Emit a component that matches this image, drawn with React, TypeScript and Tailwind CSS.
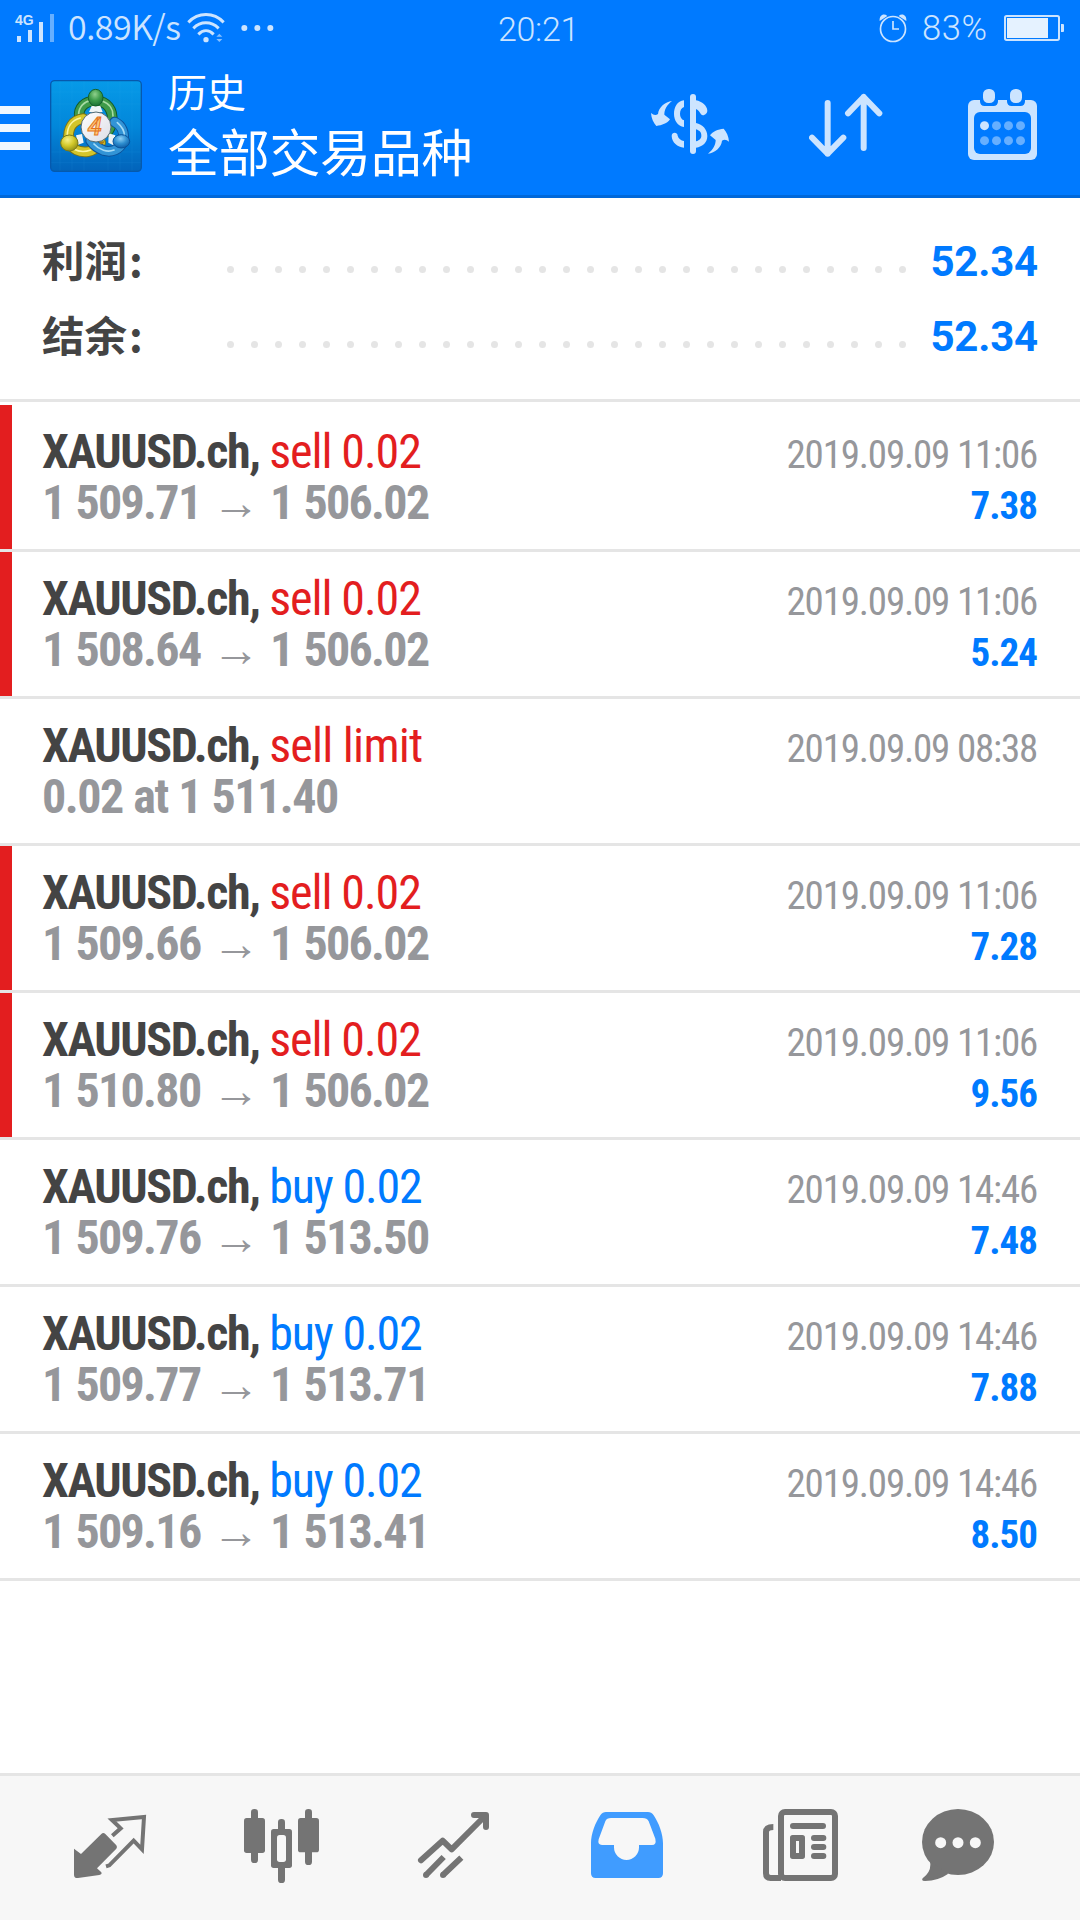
import type { ReactNode } from 'react';

type Deal = {
  side: 'sell' | 'buy';
  action: string;
  time: string;
  open?: string;
  close?: string;
  note?: string;
  profit?: string;
};

const deals: Deal[] = [
  { side: 'sell', action: 'sell 0.02', time: '2019.09.09 11:06', open: '1 509.71', close: '1 506.02', profit: '7.38' },
  { side: 'sell', action: 'sell 0.02', time: '2019.09.09 11:06', open: '1 508.64', close: '1 506.02', profit: '5.24' },
  { side: 'sell', action: 'sell limit', time: '2019.09.09 08:38', note: '0.02 at 1 511.40' },
  { side: 'sell', action: 'sell 0.02', time: '2019.09.09 11:06', open: '1 509.66', close: '1 506.02', profit: '7.28' },
  { side: 'sell', action: 'sell 0.02', time: '2019.09.09 11:06', open: '1 510.80', close: '1 506.02', profit: '9.56' },
  { side: 'buy', action: 'buy 0.02', time: '2019.09.09 14:46', open: '1 509.76', close: '1 513.50', profit: '7.48' },
  { side: 'buy', action: 'buy 0.02', time: '2019.09.09 14:46', open: '1 509.77', close: '1 513.71', profit: '7.88' },
  { side: 'buy', action: 'buy 0.02', time: '2019.09.09 14:46', open: '1 509.16', close: '1 513.41', profit: '8.50' },
];

function StatusBar() {
  return (
    <div className="flex h-14 items-center text-[#cce4ff]">
      <div className="relative ml-[15px] h-[30px] w-10">
        <svg className="h-[30px] w-10" viewBox="45 36 120 90" fill="#cce4ff">
          <rect x="51" y="105" width="12" height="18" />
          <rect x="84" y="87" width="12" height="36" />
          <rect x="117" y="63" width="12" height="60" />
          <rect x="150" y="39" width="12" height="84" fill="#66afff" />
        </svg>
        <span className="absolute top-0 left-0 font-['Liberation_Sans'] text-[14px] leading-[14px] font-bold">4G</span>
      </div>
      <span className="-mt-[5px] ml-[13px] w-[116px] font-['Noto_Sans_CJK_SC',sans-serif] text-[34px] leading-[48px] font-[350] tracking-[-0.5px] whitespace-nowrap">
        0.89K/s
      </span>
      <svg className="ml-[3px] h-[30px] w-[90px]" viewBox="560 36 270 90" fill="none" stroke="#cce4ff" strokeWidth="9">
        <path d="M564 64C594 33 640 33 670 64M579 82C601 60 632 60 655 82M594 100C608 86 626 86 640 100" />
        <g fill="#cce4ff" stroke="none">
          <circle cx="617" cy="116" r="8" />
          <path d="M657 98L666 107H648ZM657 123L666 114H648Z" opacity=".65" />
          <circle cx="732" cy="81" r="9" />
          <circle cx="771" cy="81" r="9" />
          <circle cx="810" cy="81" r="9" />
        </g>
      </svg>
      <span className="mt-[2px] ml-[221px] w-[82px] font-['Roboto'] text-[34px] leading-[48px] font-[350] tracking-[-0.3px]">20:21</span>
      <svg className="ml-auto size-[30px]" viewBox="774 36 90 90" fill="none" stroke="#cce4ff" strokeWidth="5">
        <circle cx="819" cy="84" r="37.5" />
        <path d="M819 60V84H837" />
        <path d="M779 60C777 42 792 36 802 45ZM859 60C861 42 846 36 836 45Z" fill="#cce4ff" stroke="none" />
      </svg>
      <span className="-mt-[1px] ml-[14px] w-[82px] font-['Roboto'] text-[34.5px] leading-[48px] font-[350] tracking-[0.6px]">83%</span>
      <svg className="mr-4 h-[26px] w-[60px]" viewBox="1152 42 180 78">
        <rect x="1155" y="45" width="162" height="72" rx="5" fill="none" stroke="#cce4ff" strokeWidth="6" />
        <rect x="1161" y="51" width="123" height="60" fill="#e5f2ff" />
        <path d="M1323 69H1329Q1332 69 1332 72V90Q1332 93 1329 93H1323Z" fill="#cce4ff" />
      </svg>
    </div>
  );
}

function AppLogo() {
  return (
    <svg className="ml-[19px] size-[94px]" viewBox="147 237 282 282">
      <defs>
        <linearGradient id="tile" x1="0" y1="0" x2="0" y2="1">
          <stop offset="0" stopColor="#069ae8" />
          <stop offset=".5" stopColor="#0287da" />
          <stop offset="1" stopColor="#0263ba" />
        </linearGradient>
        <radialGradient id="green" cx=".45" cy=".3" r=".75">
          <stop offset="0" stopColor="#8fd08c" />
          <stop offset=".5" stopColor="#3d9c4b" />
          <stop offset="1" stopColor="#156a30" />
        </radialGradient>
        <radialGradient id="yellow" cx=".4" cy=".3" r=".75">
          <stop offset="0" stopColor="#f6f08a" />
          <stop offset=".5" stopColor="#d3c92b" />
          <stop offset="1" stopColor="#8b8a16" />
        </radialGradient>
        <radialGradient id="blue" cx=".45" cy=".3" r=".75">
          <stop offset="0" stopColor="#8fd0f5" />
          <stop offset=".5" stopColor="#2f8fd0" />
          <stop offset="1" stopColor="#0a56a0" />
        </radialGradient>
        <linearGradient id="disc" x1="0" y1="0" x2="1" y2="1">
          <stop offset="0" stopColor="#ffffff" />
          <stop offset="1" stopColor="#dcdde6" />
        </linearGradient>
      </defs>
      <rect x="152" y="242" width="272" height="272" rx="12" fill="url(#tile)" stroke="#0659ad" strokeWidth="4" />
      <path d="M180 244V512M216 244V512M252 244V512M324 244V512M360 244V512M396 244V512M154 276H422M154 312H422M154 456H422M154 488H422" stroke="#3bb0f2" strokeWidth="1.5" opacity=".2" />
      <g fill="none" strokeLinecap="round" strokeLinejoin="round">
        <path d="M238 352C234 324 252 304 287 302C322 304 340 330 336 364C334 378 330 388 322 396" stroke="#145a2a" strokeWidth="32" />
        <path d="M238 352C234 324 252 304 287 302C322 304 340 330 336 364C334 378 330 388 322 396" stroke="#3f9a49" strokeWidth="26" />
        <path d="M236 344C236 320 254 304 272 302M308 304C330 312 340 330 339 348" stroke="#a6dba3" strokeWidth="5" />
        <path d="M250 356C218 360 202 384 206 422C216 450 240 458 264 455C282 452 294 442 302 428" stroke="#7d7413" strokeWidth="32" />
        <path d="M250 356C218 360 202 384 206 422C216 450 240 458 264 455C282 452 294 442 302 428" stroke="#d4c52a" strokeWidth="26" />
        <path d="M241 354C214 361 202 382 202 405M222 448C238 456 256 456 272 450" stroke="#fbf5a0" strokeWidth="5" />
        <path d="M344 366C366 376 374 398 370 424C358 450 336 458 312 452C292 444 280 434 272 422" stroke="#0c529a" strokeWidth="32" />
        <path d="M344 366C366 376 374 398 370 424C358 450 336 458 312 452C292 444 280 434 272 422" stroke="#3294d6" strokeWidth="26" />
        <path d="M352 368C366 380 374 394 373 408M282 432C298 450 322 458 342 450" stroke="#a6dcf7" strokeWidth="5" />
      </g>
      <path d="M275 318H301L308 336H267ZM228 406L246 402L251 428L234 434ZM346 406L326 400L325 428L340 436Z" fill="#eef4f5" />
      <path d="M314 424C312 430 306 434 302 433L296 425Z" fill="#a87917" />
      <ellipse cx="287" cy="293" rx="22" ry="25" fill="url(#green)" stroke="#12602b" strokeWidth="3" />
      <ellipse cx="208" cy="429" rx="26" ry="24" fill="url(#yellow)" stroke="#7b7a17" strokeWidth="3" />
      <ellipse cx="364" cy="424" rx="25" ry="20" fill="url(#blue)" stroke="#0b5298" strokeWidth="3" />
      <circle cx="288" cy="381" r="45" fill="url(#disc)" stroke="#566b72" strokeWidth="3" />
      <text x="284" y="406" textAnchor="middle" fontFamily="Roboto" fontStyle="italic" fontSize="76" fontWeight="600" fill="#ffc879" stroke="#e4741f" strokeWidth="3">
        4
      </text>
    </svg>
  );
}

function Toolbar() {
  return (
    <div className="flex h-[139px] items-center">
      <div className="mt-1 flex w-[30px] flex-col gap-[10px]">
        <div className="h-2 bg-[#f0f7ff]" />
        <div className="h-2 bg-[#f0f7ff]" />
        <div className="h-2 bg-[#f0f7ff]" />
      </div>
      <AppLogo />
      <div className="-mt-[9px] ml-[25px] font-['Noto_Sans_CJK_SC',sans-serif] text-white">
        <div className="text-[39px] leading-[57px]">历史</div>
        <div className="text-[51px] leading-[62px] tracking-[-0.3px]">全部交易品种</div>
      </div>
      <div className="mr-[43px] ml-auto flex items-center gap-[80px]">
        <svg className="h-[78px] w-[78px]" viewBox="93 261 234 234" fill="#cce4ff">
          <rect x="210" y="282" width="18" height="180" rx="9" />
          <path d="M192 301C172 303 162 322 162 341C162 361 173 378 192 381V361C184 358 180 350 180 341C180 332 184 324 192 321Z" />
          <path d="M228 301C246 304 262 318 262 332C262 341 250 350 243 343C239 336 236 330 228 327Z" />
          <path d="M228 369C248 374 262 388 262 408C262 428 248 440 228 443V424C240 420 244 415 244 407C244 398 240 392 228 388Z" />
          <path d="M155 408C155 396 172 395 173 407C175 416 183 421 192 423V443C172 441 156 428 155 408Z" />
          <path id="turn" d="M156 303C140 315 133 330 133 344L150 358C142 370 126 376 109 378C100 368 94 355 93 339C100 345 107 347 114 342C116 322 135 306 156 303Z" />
          <use href="#turn" transform="rotate(180 210 382)" />
        </svg>
        <svg className="h-[78px] w-[74px]" viewBox="568 261 222 234" fill="none" stroke="#cce4ff" strokeWidth="18" strokeLinecap="round" strokeLinejoin="round">
          <path d="M624 309V461M577 413L624 461L671 413M732 444V291M685 340L732 291L779 340" />
        </svg>
        <svg className="ml-[5px] h-[78px] w-[69px]" viewBox="1044 261 207 234">
          <rect x="1044" y="300" width="207" height="180" rx="18" fill="#cce4ff" />
          <path d="M1080 299H1134V304Q1134 318 1120 318H1094Q1080 318 1080 304ZM1161 299H1215V304Q1215 318 1201 318H1175Q1161 318 1161 304Z" fill="#007aff" />
          <rect x="1062" y="336" width="171" height="126" rx="18" fill="#007aff" />
          <rect x="1089" y="267" width="36" height="42" rx="16" fill="#cce4ff" />
          <rect x="1170" y="267" width="36" height="42" rx="16" fill="#cce4ff" />
          <g fill="#66afff">
            <circle cx="1093.500" cy="377" r="13.500" fill="#cce4ff" />
            <circle cx="1129.500" cy="377" r="13.500" />
            <circle cx="1165.500" cy="377" r="13.500" />
            <circle cx="1201.500" cy="377" r="13.500" />
            <circle cx="1093.500" cy="422" r="13.500" />
            <circle cx="1129.500" cy="422" r="13.500" />
            <circle cx="1165.500" cy="422" r="13.500" />
            <circle cx="1201.500" cy="422" r="13.500" />
          </g>
        </svg>
      </div>
    </div>
  );
}

function SummaryRow({ label, value }: { label: string; value: string }) {
  return (
    <div className="flex h-[75px] items-baseline pr-[42px] pl-[42px] leading-[75px]">
      <span className="w-[185px] translate-y-px font-['Noto_Sans_CJK_SC',sans-serif] text-[42.5px] leading-[75px] font-bold text-[#444]">
        {label}
        <span className="ml-[2px]">:</span>
      </span>
      <span className="flex w-[679px] -translate-y-[3px] justify-between">
        {Array.from({ length: 29 }, (_, i) => (
          <span key={i} className="size-[7px] rounded-full bg-[#e5e5e5]" />
        ))}
      </span>
      <span className="ml-auto font-['Roboto'] text-[42px] font-bold tracking-[-0.2px] text-[#007aff]">{value}</span>
    </div>
  );
}

const actionStyle = (deal: Deal) => {
  if (deal.side === 'buy') return 'tracking-[-1.15px] text-[#007aff]';
  return deal.note ? 'tracking-[-0.75px] text-[#e31e1f]' : 'tracking-[-1.05px] text-[#e31e1f]';
};

function DealRow({ deal }: { deal: Deal }) {
  return (
    <div className="flex h-[147px] border-b-[3px] border-[#e5e5e5] font-['Roboto_Condensed']">
      <div className={deal.side === 'sell' && deal.profit ? 'w-3 bg-[#e31e1f]' : 'w-3'} />
      <div className="flex-1 pt-[21px] pr-[43px] pl-[30px] leading-[51px]">
        <div className="flex h-[51px] items-baseline justify-between">
          <div className="text-[48px]">
            <span className="font-bold tracking-[-1.4px] text-[#444]">XAUUSD.ch, </span>
            <span className={actionStyle(deal)}>{deal.action}</span>
          </div>
          <div className="text-[39px] tracking-[-1.2px] text-[#96979b]">{deal.time}</div>
        </div>
        <div className="flex h-[51px] items-baseline justify-between">
          {deal.note ? (
            <div className="text-[48px] font-bold tracking-[-1.5px] text-[#96979b] [word-spacing:1px]">{deal.note}</div>
          ) : (
            <div className="flex items-baseline text-[48px] font-bold tracking-[-1.7px] text-[#96979b] [word-spacing:1.5px]">
              <span className="w-[170px]">{deal.open}</span>
              <span className="w-[58px] font-medium">→</span>
              <span>{deal.close}</span>
            </div>
          )}
          <div className="text-[39px] font-bold tracking-[-1px] text-[#007aff]">{deal.profit}</div>
        </div>
      </div>
    </div>
  );
}

function Tab({ viewBox, children }: { viewBox: string; children: ReactNode }) {
  return (
    <div className="flex flex-1 items-center justify-center">
      <svg className="size-24" viewBox={viewBox} fill="#747474">
        {children}
      </svg>
    </div>
  );
}

function TabBar() {
  return (
    <nav className="flex h-[147px] border-t-[3px] border-[#e5e5e5] bg-[#f7f7f7] px-6">
      <Tab viewBox="186 120 288 288">
        <path d="M222 266L243 282L304 222Q310 216 316 222L349 256Q353 261 349 266L291 325L304 337Q307 343 298 345L234 354Q222 355 222 344Z" />
        <path d="M337 227L362 205L336 180L432 171L426 268L401 242L328 316L318 319" fill="none" stroke="#747474" strokeWidth="12" />
      </Tab>
      <Tab viewBox="702 120 288 288">
        <rect x="732" y="174" width="63" height="105" rx="8" />
        <rect x="753" y="147" width="21" height="162" rx="10" />
        <rect x="894" y="174" width="63" height="103" rx="8" />
        <rect x="915" y="147" width="21" height="168" rx="10" />
        <rect x="813" y="207" width="63" height="117" rx="8" />
        <rect x="834" y="177" width="21" height="192" rx="10" />
        <rect x="831" y="225" width="27" height="81" rx="8" fill="#f7f7f7" />
      </Tab>
      <Tab viewBox="138 120 288 288">
        <g fill="none" stroke="#747474" strokeWidth="18">
          <path d="M183 301L248 242L275 268L372 171M342 165H378V201" strokeLinecap="round" strokeLinejoin="round" />
          <path d="M198 345L251 291M249 345L304 293" />
        </g>
        <circle cx="198" cy="345" r="9" />
        <circle cx="249" cy="345" r="9" />
      </Tab>
      <Tab viewBox="654 120 288 288">
        <path
          fill="#409cff"
          fillRule="evenodd"
          d="M738 156H864Q874 156 881 166C896 188 909 222 909 250V340Q909 354 895 354H707Q693 354 693 340V250C693 222 706 188 721 166Q728 156 738 156ZM753 174H848Q861 174 866 184L886 236Q890 255 876 255H837V262A37.500 38 0 0 1 762 262V255H726Q712 255 716 238L736 184Q740 174 753 174Z"
        />
      </Tab>
      <Tab viewBox="90 120 288 288">
        <g fill="none" stroke="#747474" strokeWidth="18">
          <rect x="183" y="156" width="162" height="198" rx="12" />
          <path d="M160 201Q138 201 138 216V340Q138 354 152 354H183" />
        </g>
        <rect x="210" y="189" width="108" height="18" rx="9" />
        <path fillRule="evenodd" d="M218 225H247Q255 225 255 233V289Q255 297 247 297H218Q210 297 210 289V233Q210 225 218 225ZM228 243V279H237V243Z" />
        <rect x="273" y="225" width="46" height="18" rx="9" />
        <rect x="273" y="252" width="46" height="18" rx="9" />
        <rect x="273" y="279" width="46" height="18" rx="9" />
      </Tab>
      <Tab viewBox="606 120 288 288">
        <ellipse cx="714" cy="246" rx="108" ry="99" />
        <path d="M630 304Q636 335 608 355Q603 363 615 363Q655 362 685 341Z" />
        <g fill="#f7f7f7">
          <circle cx="662" cy="248" r="16.500" />
          <circle cx="714" cy="248" r="16.500" />
          <circle cx="766" cy="248" r="16.500" />
        </g>
      </Tab>
    </nav>
  );
}

export default function App() {
  return (
    <div className="flex h-[1920px] w-[1080px] flex-col overflow-hidden bg-white">
      <header className="h-[198px] border-b-[3px] border-[#0068d9] bg-[#007aff]">
        <StatusBar />
        <Toolbar />
      </header>
      <section className="mb-[3px] h-[204px] border-b-[3px] border-[#e5e5e5] pt-[22px]">
        <SummaryRow label="利润" value="52.34" />
        <SummaryRow label="结余" value="52.34" />
      </section>
      <main className="flex-1">
        {deals.map((deal, i) => (
          <DealRow key={i} deal={deal} />
        ))}
      </main>
      <TabBar />
    </div>
  );
}
